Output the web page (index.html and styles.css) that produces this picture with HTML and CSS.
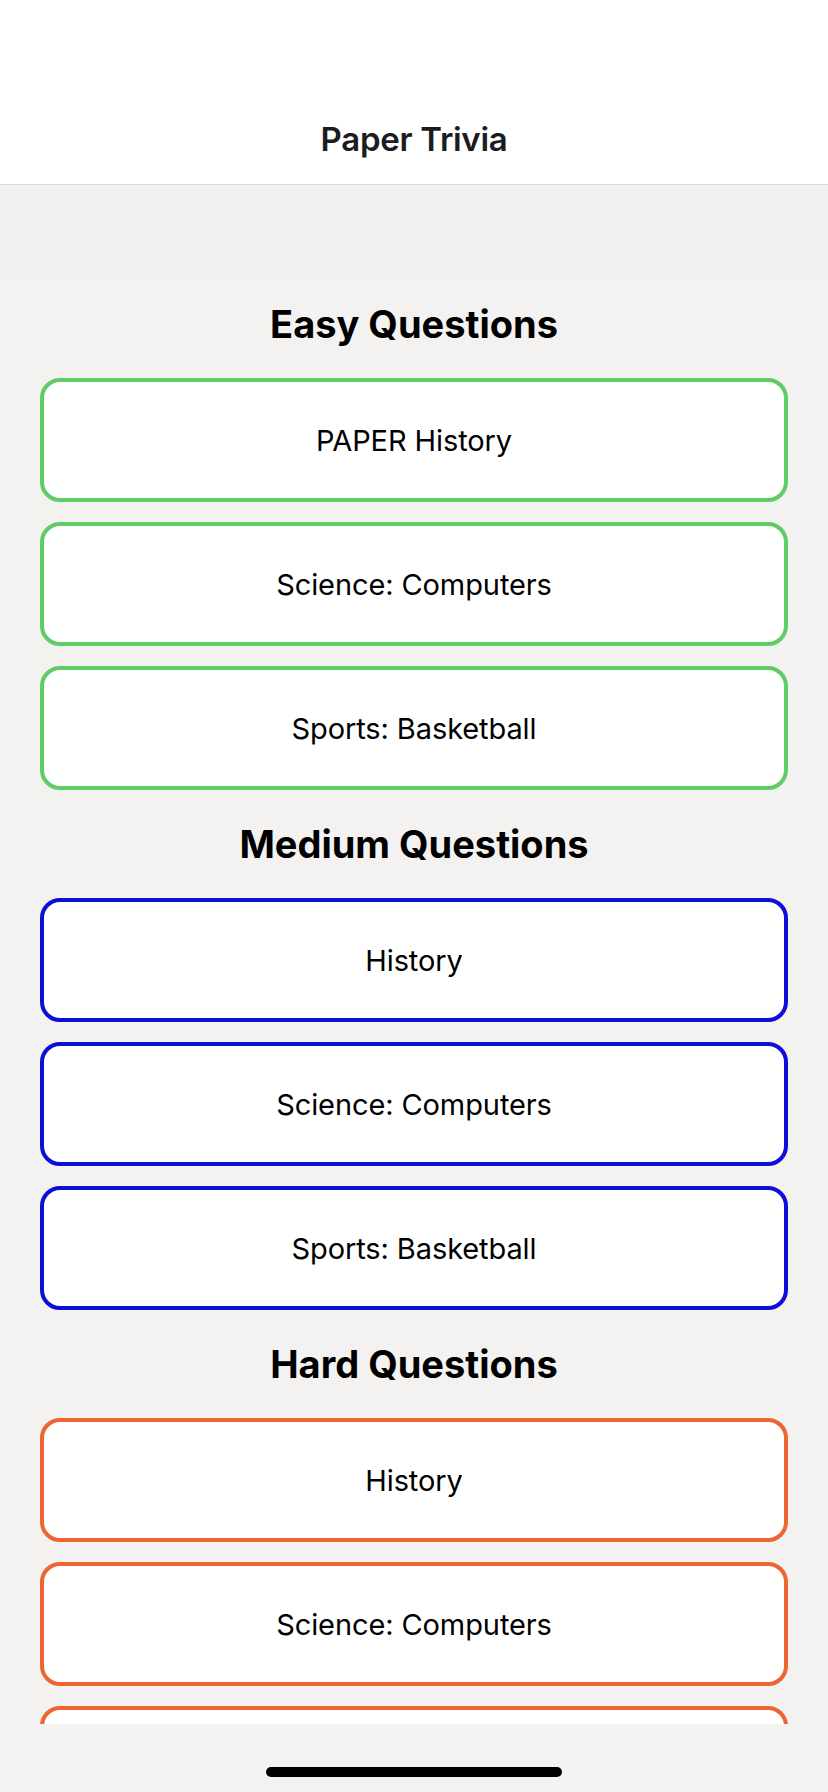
FILE: index.html
```html
<!DOCTYPE html>
<html>
<head>
<meta charset="utf-8">
<link rel="stylesheet" href="styles.css">
</head>
<body>
<div class="screen">
  <header class="navbar">
    <h1 class="nav-title">Paper Trivia</h1>
  </header>
  <main class="scroll">
    <div class="band"></div>
    <div class="content">
      <section class="section easy">
        <h2 class="section-title">Easy Questions</h2>
        <button class="card">PAPER History</button>
        <button class="card">Science: Computers</button>
        <button class="card">Sports: Basketball</button>
      </section>
      <section class="section medium">
        <h2 class="section-title">Medium Questions</h2>
        <button class="card">History</button>
        <button class="card">Science: Computers</button>
        <button class="card">Sports: Basketball</button>
      </section>
      <section class="section hard">
        <h2 class="section-title">Hard Questions</h2>
        <button class="card">History</button>
        <button class="card">Science: Computers</button>
        <button class="card">Sports: Basketball</button>
      </section>
    </div>
  </main>
  <footer class="home-area">
    <div class="home-indicator"></div>
  </footer>
</div>
</body>
</html>
```

FILE: styles.css
```css
* { box-sizing: border-box; }
html, body {
  margin: 0;
  padding: 0;
  background: #f3f2f1;
}
body {
  font-family: Inter, "Noto Sans", "Liberation Sans", sans-serif;
  color: #000;
}
.screen {
  width: 828px;
  height: 1792px;
  display: flex;
  flex-direction: column;
  overflow: hidden;
}
.navbar {
  height: 185px;
  flex: none;
  background: #fff;
  border-bottom: 1px solid #d9d9d9;
  padding-top: 119px;
}
.nav-title {
  margin: 0;
  text-align: center;
  font-size: 33px;
  line-height: 40px;
  font-weight: 600;
  color: #1c1c1e;
  letter-spacing: -0.3px;
}
.scroll {
  height: 1539px;
  flex: none;
  overflow: hidden;
  background: #f3f2f1;
}
.band {
  height: 93px;
  background: #f1f1f1;
}
.content {
  padding: 23px 40px 0;
  display: flex;
  flex-direction: column;
  gap: 31px;
}
.section {
  display: flex;
  flex-direction: column;
  gap: 20px;
}
.section-title {
  margin: 0 0 11px;
  text-align: center;
  font-size: 38px;
  line-height: 46px;
  font-weight: 700;
  letter-spacing: 0;
}
.card {
  height: 124px;
  width: 100%;
  background: #fff;
  border: 4px solid;
  border-radius: 20px;
  font-family: inherit;
  font-size: 29px;
  color: #000;
  display: flex;
  align-items: center;
  justify-content: center;
  padding: 0;
  letter-spacing: -0.1px;
}
.easy .card { border-color: #5fcc68; }
.medium .card { border-color: #0c0fd6; }
.hard .card { border-color: #ee6531; }
.home-area {
  flex: 1;
  background: #f3f2f1;
  padding-top: 43px;
  display: flex;
  justify-content: center;
}
.home-indicator {
  width: 296px;
  height: 10px;
  border-radius: 5px;
  background: #000;
}
```
